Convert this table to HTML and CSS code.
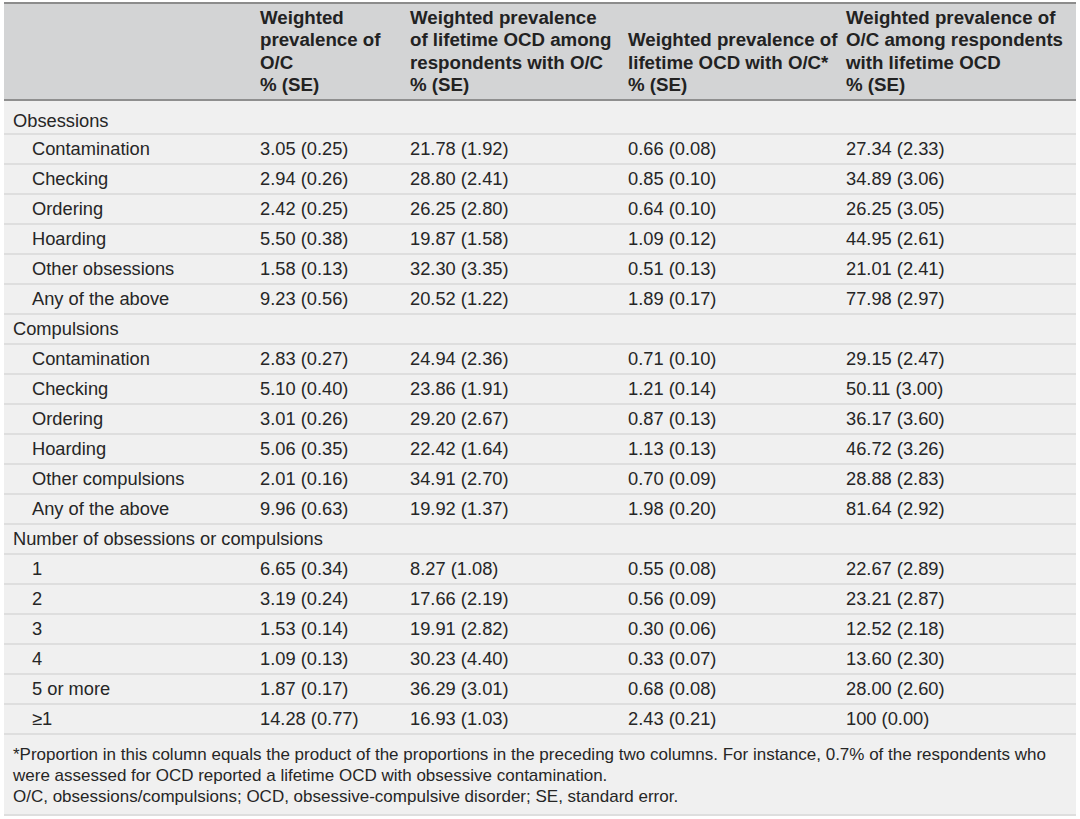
FILE: index.html
```html
<!DOCTYPE html>
<html lang="en">
<head>
<meta charset="utf-8">
<title>Weighted prevalence of O/C</title>
<link rel="stylesheet" href="styles.css">
</head>
<body>
<div class="sheet">
  <table class="data">
    <colgroup>
      <col class="c1"><col class="c2"><col class="c3"><col class="c4"><col class="c5">
    </colgroup>
    <thead>
      <tr>
        <th></th>
        <th>Weighted<br>prevalence of<br>O/C<br>% (SE)</th>
        <th>Weighted prevalence<br>of lifetime OCD among<br>respondents with O/C<br>% (SE)</th>
        <th>Weighted prevalence of<br>lifetime OCD with O/C*<br>% (SE)</th>
        <th>Weighted prevalence of<br>O/C among respondents<br>with lifetime OCD<br>% (SE)</th>
      </tr>
    </thead>
    <tbody>
      <tr class="section first"><td colspan="5">Obsessions</td></tr>
      <tr><td class="sub">Contamination</td><td>3.05 (0.25)</td><td>21.78 (1.92)</td><td>0.66 (0.08)</td><td>27.34 (2.33)</td></tr>
      <tr><td class="sub">Checking</td><td>2.94 (0.26)</td><td>28.80 (2.41)</td><td>0.85 (0.10)</td><td>34.89 (3.06)</td></tr>
      <tr><td class="sub">Ordering</td><td>2.42 (0.25)</td><td>26.25 (2.80)</td><td>0.64 (0.10)</td><td>26.25 (3.05)</td></tr>
      <tr><td class="sub">Hoarding</td><td>5.50 (0.38)</td><td>19.87 (1.58)</td><td>1.09 (0.12)</td><td>44.95 (2.61)</td></tr>
      <tr><td class="sub">Other obsessions</td><td>1.58 (0.13)</td><td>32.30 (3.35)</td><td>0.51 (0.13)</td><td>21.01 (2.41)</td></tr>
      <tr><td class="sub">Any of the above</td><td>9.23 (0.56)</td><td>20.52 (1.22)</td><td>1.89 (0.17)</td><td>77.98 (2.97)</td></tr>
      <tr class="section"><td colspan="5">Compulsions</td></tr>
      <tr><td class="sub">Contamination</td><td>2.83 (0.27)</td><td>24.94 (2.36)</td><td>0.71 (0.10)</td><td>29.15 (2.47)</td></tr>
      <tr><td class="sub">Checking</td><td>5.10 (0.40)</td><td>23.86 (1.91)</td><td>1.21 (0.14)</td><td>50.11 (3.00)</td></tr>
      <tr><td class="sub">Ordering</td><td>3.01 (0.26)</td><td>29.20 (2.67)</td><td>0.87 (0.13)</td><td>36.17 (3.60)</td></tr>
      <tr><td class="sub">Hoarding</td><td>5.06 (0.35)</td><td>22.42 (1.64)</td><td>1.13 (0.13)</td><td>46.72 (3.26)</td></tr>
      <tr><td class="sub">Other compulsions</td><td>2.01 (0.16)</td><td>34.91 (2.70)</td><td>0.70 (0.09)</td><td>28.88 (2.83)</td></tr>
      <tr><td class="sub">Any of the above</td><td>9.96 (0.63)</td><td>19.92 (1.37)</td><td>1.98 (0.20)</td><td>81.64 (2.92)</td></tr>
      <tr class="section"><td colspan="5">Number of obsessions or compulsions</td></tr>
      <tr><td class="sub">1</td><td>6.65 (0.34)</td><td>8.27 (1.08)</td><td>0.55 (0.08)</td><td>22.67 (2.89)</td></tr>
      <tr><td class="sub">2</td><td>3.19 (0.24)</td><td>17.66 (2.19)</td><td>0.56 (0.09)</td><td>23.21 (2.87)</td></tr>
      <tr><td class="sub">3</td><td>1.53 (0.14)</td><td>19.91 (2.82)</td><td>0.30 (0.06)</td><td>12.52 (2.18)</td></tr>
      <tr><td class="sub">4</td><td>1.09 (0.13)</td><td>30.23 (4.40)</td><td>0.33 (0.07)</td><td>13.60 (2.30)</td></tr>
      <tr><td class="sub">5 or more</td><td>1.87 (0.17)</td><td>36.29 (3.01)</td><td>0.68 (0.08)</td><td>28.00 (2.60)</td></tr>
      <tr><td class="sub">≥1</td><td>14.28 (0.77)</td><td>16.93 (1.03)</td><td>2.43 (0.21)</td><td>100 (0.00)</td></tr>
    </tbody>
  </table>
  <div class="notes">
    <p>*Proportion in this column equals the product of the proportions in the preceding two columns. For instance, 0.7% of the respondents who were assessed for OCD reported a lifetime OCD with obsessive contamination.</p>
    <p>O/C, obsessions/compulsions; OCD, obsessive-compulsive disorder; SE, standard error.</p>
  </div>
</div>
</body>
</html>
```
FILE: styles.css
```css
html, body {
  margin: 0;
  padding: 0;
  background: #ffffff;
}

body {
  font-family: "Liberation Sans", Arial, Helvetica, sans-serif;
  color: #262626;
}

.sheet {
  margin: 2px 4px 0 4px;
  width: 1072px;
}

.data {
  width: 1072px;
  border-collapse: collapse;
  table-layout: fixed;
  font-size: 18.3px;
}

.c1 { width: 247px; }
.c2 { width: 150px; }
.c3 { width: 218px; }
.c4 { width: 218px; }
.c5 { width: 239px; }

.data thead th {
  background: #d3d4d5;
  border-top: 2px solid #8c8c8c;
  border-bottom: 2px solid #8f8f8f;
  font-size: 18.7px;
  font-weight: bold;
  text-align: left;
  vertical-align: bottom;
  line-height: 22.3px;
  padding: 3px 0 3px 9px;
  white-space: nowrap;
  color: #222222;
}

.data tbody td {
  background: #f0f0f0;
  border-bottom: 2px solid #dedede;
  height: 28px;
  line-height: 28px;
  padding: 0 0 0 9px;
  white-space: nowrap;
}

.data tbody tr.first td {
  height: 25px;
  padding-top: 7px;
  line-height: 25px;
}

.data tbody td.sub {
  padding-left: 28px;
}

.notes {
  background: #f0f0f0;
  border-bottom: 2px solid #dedede;
  padding: 9px 20px 7px 9px;
  font-size: 17px;
  line-height: 21px;
}

.notes p {
  margin: 0;
}
```
